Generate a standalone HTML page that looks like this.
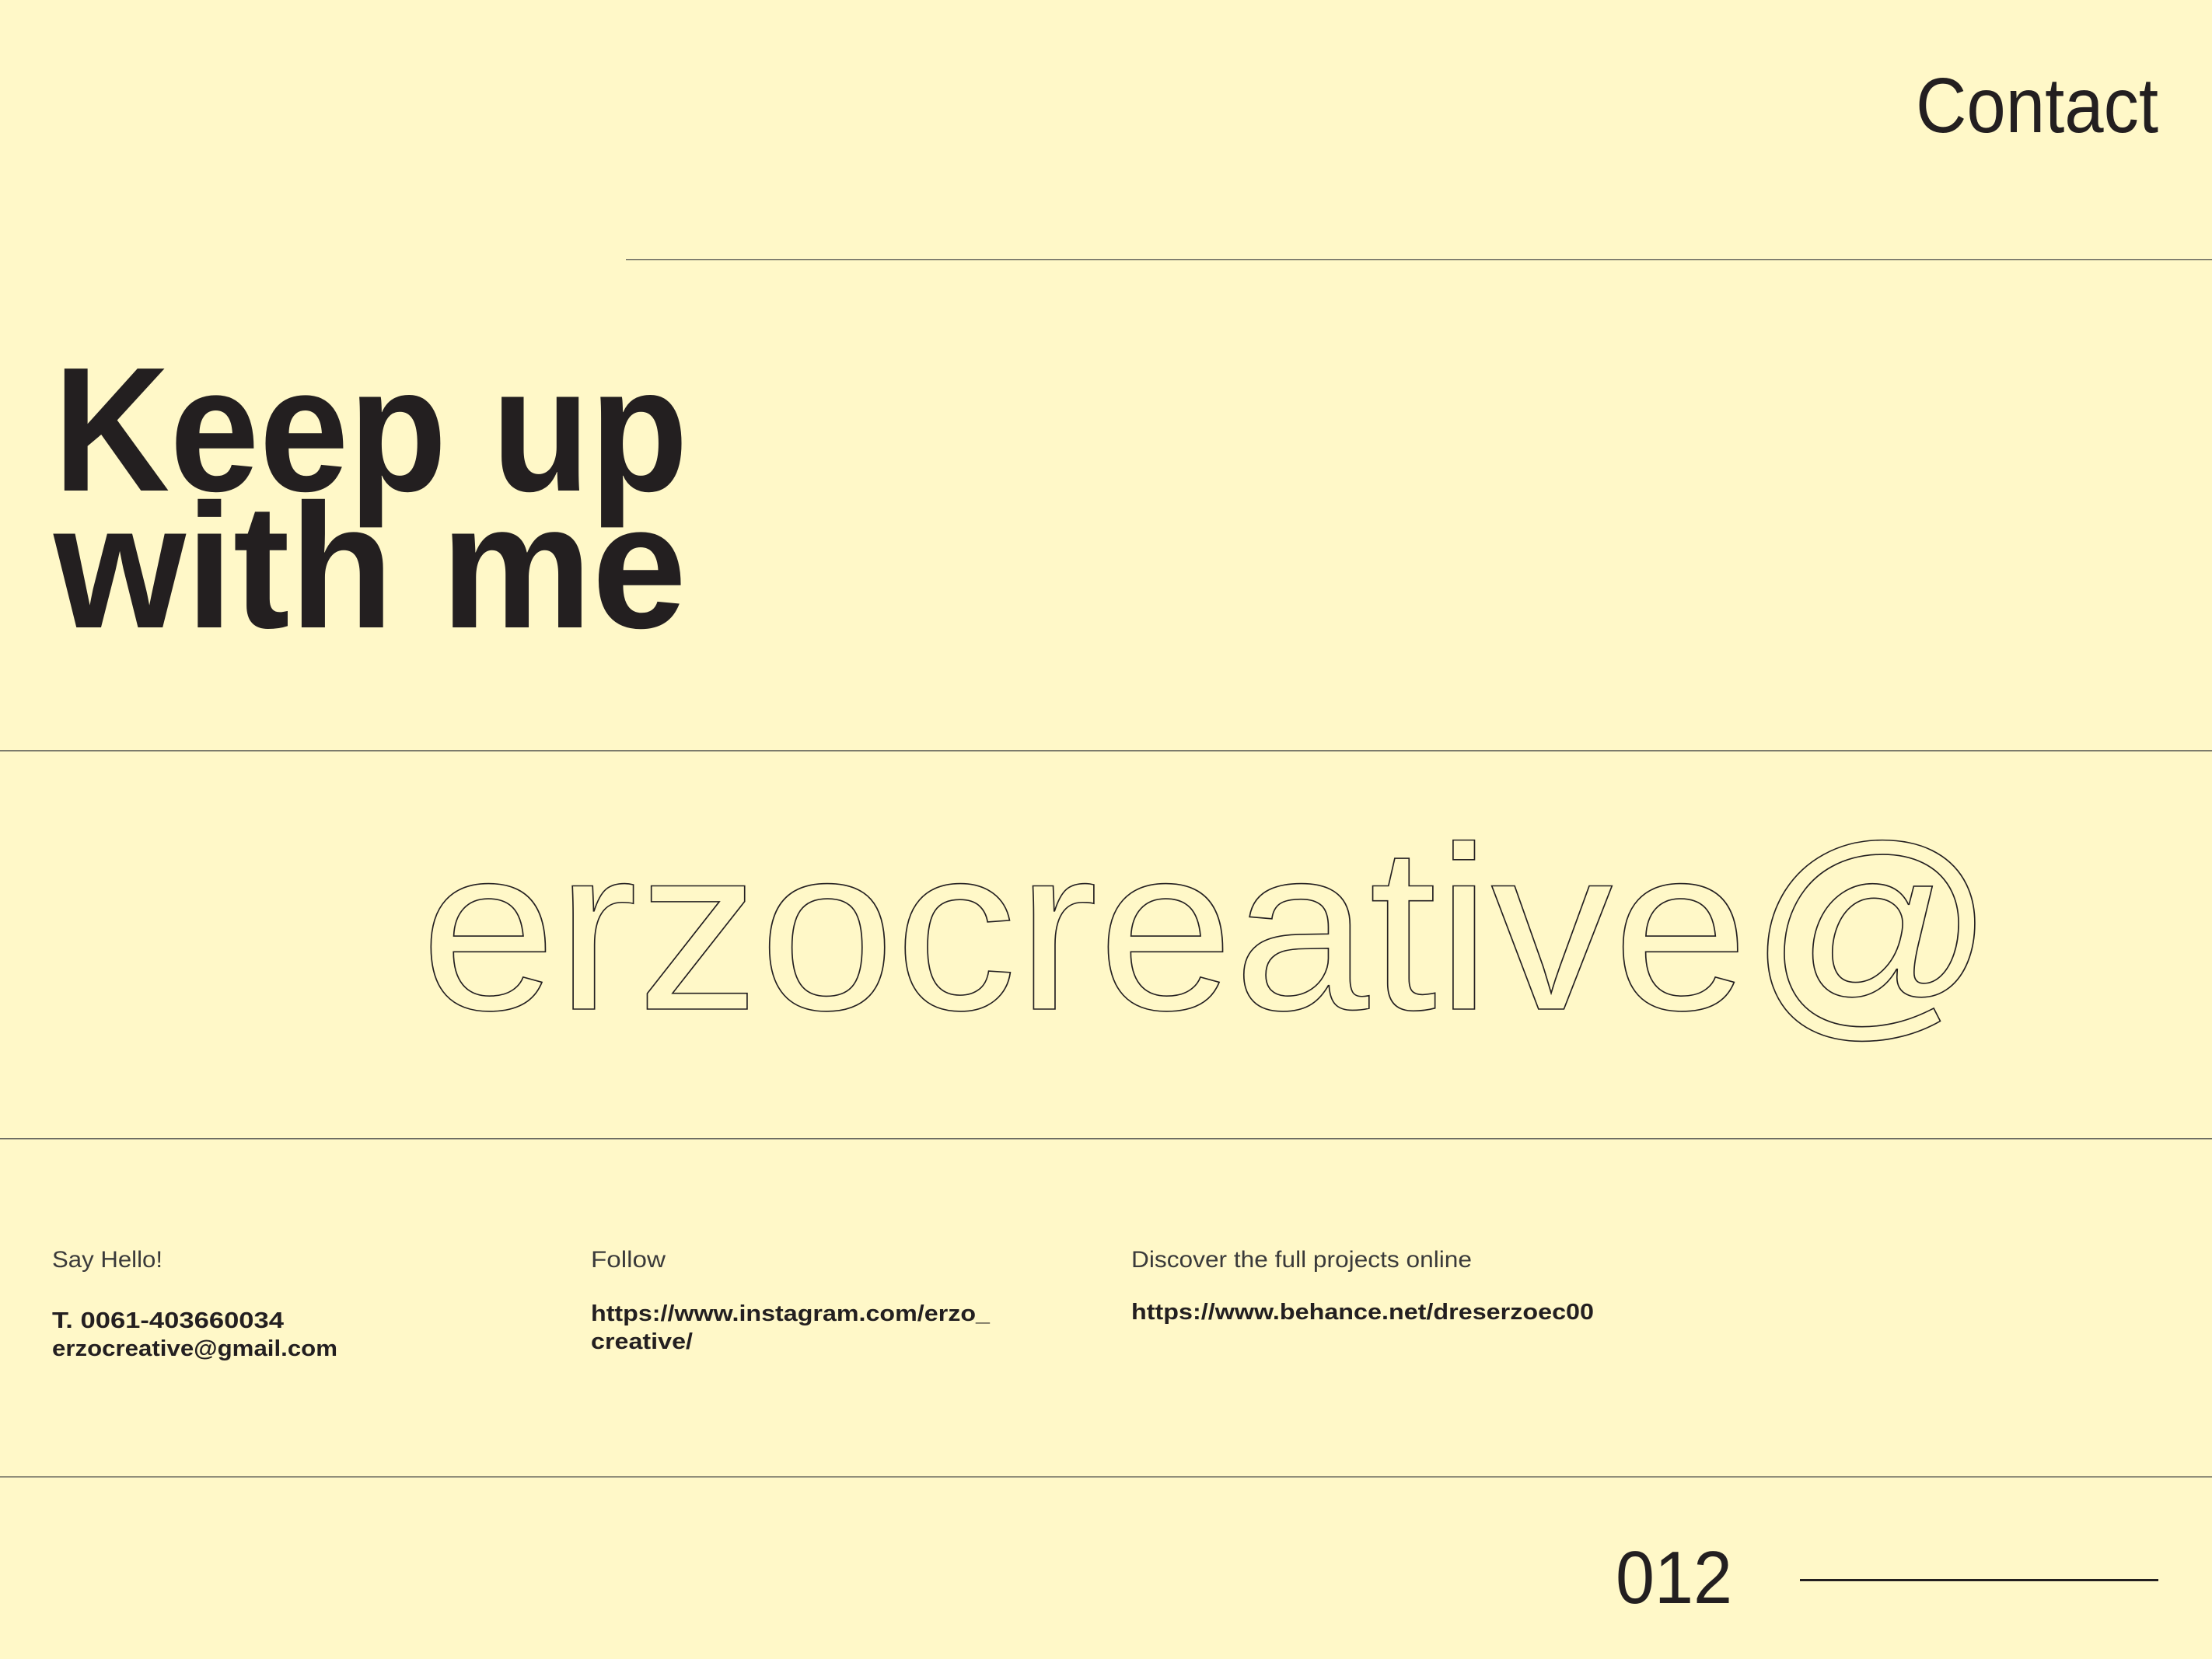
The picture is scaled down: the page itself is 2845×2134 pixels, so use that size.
<!DOCTYPE html>
<html><head><meta charset="utf-8"><style>
html,body{margin:0;padding:0;background:#fff8c8;}
svg{display:block}
</style></head><body>
<svg width="2845" height="2134" viewBox="0 0 2845 2134" xmlns="http://www.w3.org/2000/svg" font-family="Liberation Sans, sans-serif" fill="#231f20">
<rect width="2845" height="2134" fill="#fff8c8"/>
<text x="2464" y="170" font-size="100" textLength="312" lengthAdjust="spacingAndGlyphs">Contact</text>
<rect x="805" y="333" width="2040" height="1.5" fill="#6a6a60"/>
<text x="69" y="631" font-size="228" font-weight="bold" textLength="816" lengthAdjust="spacingAndGlyphs">Keep up</text>
<text x="69" y="807" font-size="228" font-weight="bold" textLength="814" lengthAdjust="spacingAndGlyphs">with me</text>
<rect x="0" y="965" width="2845" height="1.5" fill="#6a6a60"/>
<text x="541" y="1298" font-size="300" fill="none" stroke="#231f20" stroke-width="1.6" textLength="2026" lengthAdjust="spacingAndGlyphs">erzocreative@</text>
<rect x="0" y="1464" width="2845" height="1.5" fill="#6a6a60"/>
<g font-size="30" fill="#3a3a3a">
<text x="67" y="1630" textLength="142" lengthAdjust="spacingAndGlyphs">Say Hello!</text>
<text x="760" y="1630" textLength="96" lengthAdjust="spacingAndGlyphs">Follow</text>
<text x="1455" y="1630" textLength="438" lengthAdjust="spacingAndGlyphs">Discover the full projects online</text>
</g>
<g font-size="29" font-weight="bold">
<text x="67" y="1708" textLength="298" lengthAdjust="spacingAndGlyphs">T. 0061-403660034</text>
<text x="67" y="1744" textLength="367" lengthAdjust="spacingAndGlyphs">erzocreative@gmail.com</text>
<text x="760" y="1699" textLength="513" lengthAdjust="spacingAndGlyphs">https://www.instagram.com/erzo_</text>
<text x="760" y="1735" textLength="131" lengthAdjust="spacingAndGlyphs">creative/</text>
<text x="1455" y="1697" textLength="595" lengthAdjust="spacingAndGlyphs">https://www.behance.net/dreserzoec00</text>
</g>
<rect x="0" y="1899" width="2845" height="1.5" fill="#6a6a60"/>
<text x="2078" y="2062" font-size="96" textLength="150" lengthAdjust="spacingAndGlyphs">012</text>
<rect x="2315" y="2031" width="461" height="3" fill="#231f20"/>
</svg>
</body></html>
